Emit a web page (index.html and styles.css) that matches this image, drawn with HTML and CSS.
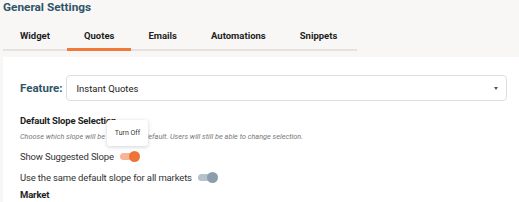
FILE: index.html
```html
<!DOCTYPE html>
<html>
<head>
<meta charset="utf-8">
<link rel="stylesheet" href="styles.css">
</head>
<body>
<div class="page">
  <h1 class="title">General Settings</h1>
  <nav class="tabs">
    <div class="tab">Widget</div>
    <div class="tab active">Quotes</div>
    <div class="tab">Emails</div>
    <div class="tab">Automations</div>
    <div class="tab">Snippets</div>
  </nav>
  <section class="card">
    <div class="feature-row">
      <label class="feature-label">Feature:</label>
      <div class="select">
        <span>Instant Quotes</span>
        <span class="caret"></span>
      </div>
    </div>
    <div class="section-title">Default Slope Selection</div>
    <div class="hint">Choose which slope will be selected by default. Users will still be able to change selection.</div>
    <div class="toggle-row">
      <span>Show Suggested Slope</span>
      <span class="switch on"><span class="knob"></span></span>
    </div>
    <div class="toggle-row second">
      <span>Use the same default slope for all markets</span>
      <span class="switch off"><span class="knob"></span></span>
    </div>
    <div class="section-title market">Market</div>
    <div class="tooltip">Turn Off</div>
  </section>
</div>
</body>
</html>
```
FILE: styles.css
```css
html, body {
  margin: 0;
  padding: 0;
  background: #f8f7f6;
  font-family: "Roboto", "Liberation Sans", sans-serif;
  color: #2a2a2a;
  overflow: hidden;
}
.page {
  padding-left: 3px;
}
.title {
  margin: 0;
  padding-top: 1px;
  font-size: 11.8px;
  font-weight: 700;
  color: #2f5568;
  line-height: 13px;
}
.tabs {
  display: flex;
  width: 354px;
  margin-top: 15px;
  height: 20px;
  border-bottom: 2px solid #e3e2e1;
}
.tab {
  padding: 0 17px;
  line-height: 14px;
  font-size: 9.5px;
  font-weight: 700;
  color: #1e1e1e;
  position: relative;
}
.tab.active::after {
  content: "";
  position: absolute;
  left: 0;
  right: 0;
  bottom: -2px;
  height: 3px;
  background: #f07a3c;
}
.card {
  position: relative;
  margin-top: 6px;
  background: #fff;
  padding: 18px 12px 20px 17px;
  height: 200px;
}
.feature-row {
  display: flex;
  align-items: center;
  gap: 4px;
}
.feature-label {
  font-size: 11.5px;
  font-weight: 700;
  color: #2f5568;
}
.select {
  flex: 1;
  height: 24px;
  border: 1px solid #dedede;
  border-radius: 4px;
  display: flex;
  align-items: center;
  justify-content: space-between;
  padding: 0 8px 0 9px;
  font-size: 9.5px;
  color: #222;
}
.caret {
  width: 0;
  height: 0;
  border-left: 2.5px solid transparent;
  border-right: 2.5px solid transparent;
  border-top: 3px solid #555;
}
.section-title {
  margin-top: 14px;
  font-size: 9.5px;
  font-weight: 700;
  letter-spacing: -0.15px;
  color: #1e1e1e;
  line-height: 12px;
}
.hint {
  margin-top: 5px;
  font-size: 7.3px;
  font-style: italic;
  color: #777;
  line-height: 10px;
}
.toggle-row {
  display: flex;
  align-items: center;
  gap: 6px;
  font-size: 9.5px;
  letter-spacing: -0.15px;
  color: #333;
  height: 14px;
  margin-top: 7px;
}
.toggle-row.second {
  margin-top: 7px;
}
.switch {
  position: relative;
  width: 19px;
  height: 7px;
  border-radius: 4px;
}
.switch .knob {
  position: absolute;
  top: -2px;
  width: 11px;
  height: 11px;
  border-radius: 50%;
}
.switch.on { background: #f6b596; }
.switch.on .knob { right: -1px; background: #ee7437; }
.switch.off { background: #b4c2c9; }
.switch.off .knob { right: -1px; background: #8a9fa9; }
.market {
  margin-top: 5px;
}
.tooltip {
  position: absolute;
  left: 104px;
  top: 63px;
  width: 41px;
  height: 26px;
  background: #fff;
  border-radius: 3px;
  box-shadow: 0 1px 4px rgba(0,0,0,0.18);
  font-size: 7px;
  color: #333;
  display: flex;
  align-items: center;
  justify-content: center;
}
```
